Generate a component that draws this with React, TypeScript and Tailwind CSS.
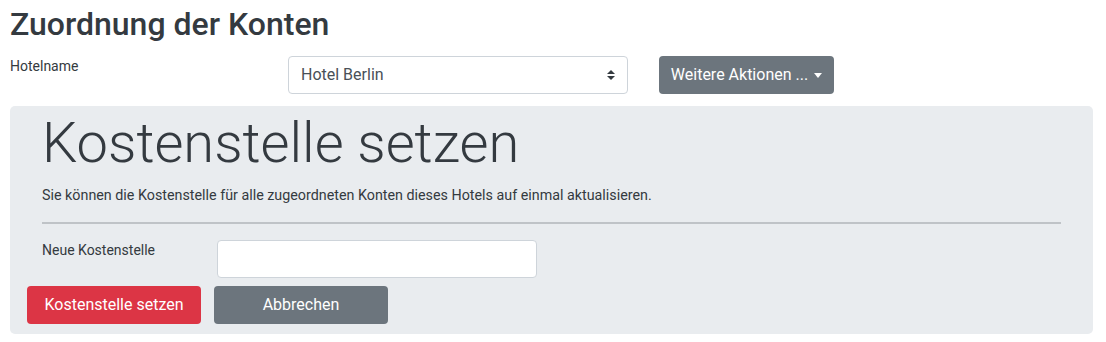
import React, { useState } from "react";

const App = () => {
  const [hotel, setHotel] = useState("Hotel Berlin");
  const [kst, setKst] = useState("");

  return (
    <div className="w-[1106px] h-[342px] bg-white text-[#343a40] font-['Roboto',sans-serif] overflow-hidden">
      <h2 className="ml-[10px] mt-[5px] text-[32px] leading-[1.2] font-medium">
        Zuordnung der Konten
      </h2>

      <div className="flex items-start mt-[13px] ml-[10px]">
        <label className="w-[278px] text-[14px] leading-[1.5]">Hotelname</label>
        <div className="relative w-[340px] h-[38px]">
          <select
            value={hotel}
            onChange={(e) => setHotel(e.target.value)}
            className="appearance-none w-full h-full bg-white border border-[#ced4da] rounded-[4px] pl-[12px] pr-8 text-[16px] text-[#495057] outline-none"
          >
            <option>Hotel Berlin</option>
            <option>Hotel Hamburg</option>
            <option>Hotel München</option>
          </select>
          <svg
            className="absolute right-[13px] top-[14px] pointer-events-none"
            width="8"
            height="10"
            viewBox="0 0 8 10"
          >
            <path d="M4 0 L8 4 H0 Z" fill="#343a40" />
            <path d="M0 6 H8 L4 10 Z" fill="#343a40" />
          </svg>
        </div>
        <button
          type="button"
          className="ml-[31px] h-[38px] w-[175px] flex items-center justify-center gap-[6px] bg-[#6c757d] text-white text-[16px] rounded-[4px]"
        >
          Weitere Aktionen ...
          <span className="w-0 h-0 border-l-[4px] border-r-[4px] border-t-[5px] border-l-transparent border-r-transparent border-t-white mt-[1px]" />
        </button>
      </div>

      <div className="ml-[10px] mt-[12px] w-[1083px] h-[228px] bg-[#e9ecef] rounded-[5px] pt-[4px] pb-[11px]">
        <div className="px-[32px]">
          <h1 className="text-[56px] leading-[1.2] font-light">Kostenstelle setzen</h1>
          <p className="mt-[7px] text-[14.3px] leading-[21px]">
            Sie können die Kostenstelle für alle zugeordneten Konten dieses Hotels auf einmal aktualisieren.
          </p>
          <div className="mt-[16px] h-[2px] bg-[#bfc3c7]" />
          <div className="flex items-start mt-[16px]">
            <label className="w-[175px] text-[14px] leading-[1.5]">Neue Kostenstelle</label>
            <input
              value={kst}
              onChange={(e) => setKst(e.target.value)}
              className="w-[320px] h-[38px] bg-white border border-[#ced4da] rounded-[4px] px-3 outline-none"
            />
          </div>
        </div>
        <div className="flex mt-[8px] ml-[17px] gap-[13px]">
          <button
            type="button"
            className="w-[174px] h-[38px] bg-[#dc3545] text-white text-[16px] rounded-[4px]"
          >
            Kostenstelle setzen
          </button>
          <button
            type="button"
            className="w-[174px] h-[38px] bg-[#6c757d] text-white text-[16px] rounded-[4px]"
          >
            Abbrechen
          </button>
        </div>
      </div>
    </div>
  );
};

export default App;
